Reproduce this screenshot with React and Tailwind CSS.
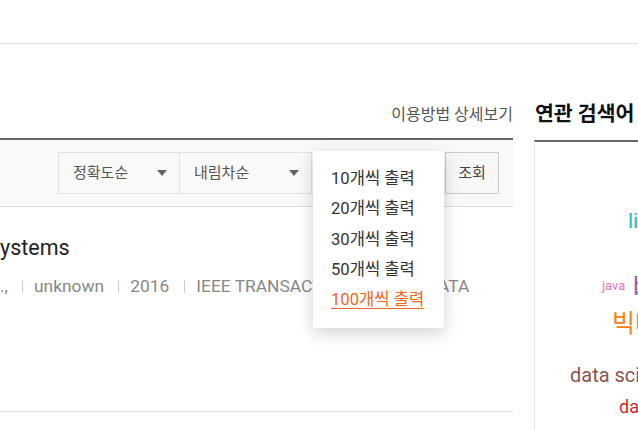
import React from 'react';

const FONT = { fontFamily: 'Roboto, "Noto Sans CJK KR", "Noto Sans", sans-serif' };

const PAGE_SIZES = ['10개씩 출력', '20개씩 출력', '30개씩 출력', '50개씩 출력', '100개씩 출력'];

const Caret = () => (
    <svg width="10" height="6" viewBox="0 0 10 6" className="shrink-0">
        <path d="M0 0h10L5 6z" fill="#666" />
    </svg>
);

const SelectBox = ({ label, className }) => (
    <div className={`h-full flex items-center justify-between pl-[14px] pr-[12px] text-[15px] text-[#555] ${className}`}>
        <span>{label}</span>
        <Caret />
    </div>
);

const words = [
    { text: 'linked data', color: 'text-[#17becf]', cls: 'left-[93px] top-[69px] text-[21px]' },
    { text: 'java', color: 'text-[#e377c2]', cls: 'left-[67px] top-[137px] text-[13px]' },
    { text: 'big data', color: 'text-[#9467bd]', cls: 'left-[98px] top-[132px] text-[25px]' },
    { text: '빅데이터', color: 'text-[#ff7f0e]', cls: 'left-[77px] top-[169px] text-[25px]' },
    { text: 'data science', color: 'text-[#8c564b]', cls: 'left-[35px] top-[223px] text-[20px]' },
    { text: 'data mining', color: 'text-[#d62728]', cls: 'left-[84px] top-[256px] text-[18px]' },
];

const Sep = ({ className }) => <span className={`w-px h-[13px] bg-[#ccc] ${className}`} />;

export default function App() {
    return (
        <div className="w-[638px] h-[430px] overflow-hidden bg-white" style={FONT}>
            {/* header strip */}
            <div className="h-[44px] border-b border-[#e0e0e0]" />

            <div className="flex gap-[21px]">
                {/* results column */}
                <div className="w-[513px] shrink-0">
                    <div className="h-[94px] flex items-end justify-end pb-[12px] text-[16px] leading-[22px] text-[#555] whitespace-nowrap">
                        이용방법 상세보기
                    </div>

                    {/* toolbar */}
                    <div className="h-[69px] border-t-2 border-b border-t-[#666] border-b-[#ddd] bg-[#f9f9f9] flex items-center justify-end pr-[14px]">
                        <div className="flex h-[42px]">
                            <SelectBox label="정확도순" className="w-[122px] border border-[#e2e2e2]" />
                            <SelectBox label="내림차순" className="w-[132px] border-y border-r border-[#e2e2e2]" />
                            <div className="relative w-[132px] border-y border-r border-[#e2e2e2]">
                                <div className="absolute left-px top-[-2px] w-[131px] h-[177px] bg-white pt-[13px] pl-[18px] shadow-[0_5px_16px_rgba(0,0,0,0.18)] z-10">
                                    {PAGE_SIZES.map((s, i) => (
                                        <div
                                            key={s}
                                            className={`leading-[30.3px] text-[16.6px] whitespace-nowrap ${i === PAGE_SIZES.length - 1 ? 'text-[#f26522] underline underline-offset-[3px]' : 'text-[#333]'}`}
                                        >
                                            {s}
                                        </div>
                                    ))}
                                </div>
                            </div>
                            <button className="ml-px w-[54px] h-full border border-[#ccc] bg-[#f7f7f7] text-[15px] text-[#444]">
                                조회
                            </button>
                        </div>
                    </div>

                    {/* result item */}
                    <div className="h-[205px] border-b border-[#ddd] pt-[26px]">
                        <div className="text-[21.5px] leading-[30px] text-[#222] whitespace-nowrap">ystems</div>
                        <div className="mt-[11px] flex items-center text-[17.4px] leading-[25px] text-[#888] whitespace-nowrap">
                            <span>.,</span>
                            <Sep className="ml-[14px] mr-[11px]" />
                            <span>unknown</span>
                            <Sep className="ml-[14px] mr-[11px]" />
                            <span>2016</span>
                            <Sep className="ml-[15px] mr-[11px]" />
                            <span>IEEE TRANSACTIONS ON BIG DATA</span>
                        </div>
                    </div>
                </div>

                {/* related keywords */}
                <div className="w-[200px] shrink-0">
                    <div className="h-[96px] flex items-end pb-[13px] pl-px text-[20.5px] leading-[26px] font-bold text-[#111] whitespace-nowrap">
                        연관 검색어
                    </div>
                    <div className="relative h-[300px] border-t-2 border-l border-t-[#666] border-l-[#e5e5e5]">
                        {words.map((w) => (
                            <span key={w.text} className={`absolute leading-none whitespace-nowrap ${w.cls} ${w.color}`}>
                                {w.text}
                            </span>
                        ))}
                    </div>
                </div>
            </div>
        </div>
    );
}
